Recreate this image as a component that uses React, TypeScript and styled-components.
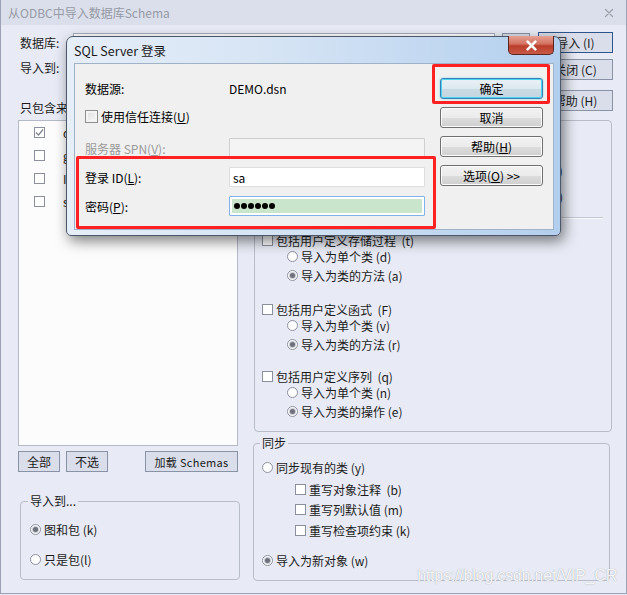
import React from 'react'
import styled, { createGlobalStyle } from 'styled-components'

const GlobalStyle = createGlobalStyle`
  html, body {
    margin: 0;
    padding: 0;
    background: #e8ebf5;
  }
  body {
    font-family: "Noto Sans CJK SC", "Noto Sans", sans-serif;
    font-size: 12px;
    color: #1b1b1b;
  }
  * { box-sizing: border-box; }
`

const Window = styled.div`
  position: relative;
  width: 627px;
  height: 594px;
  background: #e8ebf5;
  border: 1px solid #9aa3b6;
  border-top: none;
  display: flex;
  flex-direction: column;
  overflow: hidden;
`

const TitleBar = styled.div`
  height: 25px;
  flex: none;
  background: #dbdfeb;
  display: flex;
  align-items: center;
  justify-content: space-between;
  padding: 0 12px 0 7px;
  color: #969aa5;
  font-size: 12px;
`

const Body = styled.div`
  flex: 1;
  display: flex;
  flex-direction: column;
  padding: 7px 14px 0 17px;
`

const TopRow = styled.div`
  display: flex;
  height: 88px;
  flex: none;
`

const Fields = styled.div`
  flex: 1;
  display: flex;
  flex-direction: column;
`

const FieldRow = styled.div<{ $top?: number }>`
  display: flex;
  align-items: center;
  height: 20px;
  margin-top: ${p => p.$top ?? 0}px;
`

const FieldLabel = styled.span`
  width: 55px;
  padding-left: 2px;
  flex: none;
`

const TextBox = styled.div`
  width: 422px;
  height: 19px;
  background: #fff;
  border: 1px solid #a5acbd;
`

const ClassicButton = styled.div<{ $w?: number; $top?: number; $default?: boolean }>`
  width: ${p => p.$w ?? 75}px;
  height: 21px;
  margin-top: ${p => p.$top ?? 0}px;
  flex: none;
  display: flex;
  align-items: center;
  justify-content: center;
  background: #d9deea;
  border: 1px solid ${p => (p.$default ? '#2f568c' : '#8a93a6')};
  color: #1b1b1b;
  white-space: nowrap;
`

const BrowseButton = styled(ClassicButton)`
  height: 19px;
  margin-left: 7px;
`

const IncludeLabel = styled.div`
  margin-top: 23px;
  padding-left: 2px;
  line-height: 16px;
`

const ButtonCol = styled.div`
  width: 75px;
  margin-left: 8px;
  display: flex;
  flex-direction: column;
`

const Main = styled.div`
  flex: 1;
  display: flex;
`

const LeftCol = styled.div`
  width: 220px;
  flex: none;
  display: flex;
  flex-direction: column;
`

const ListBox = styled.div`
  height: 326px;
  background: #fcfcfc;
  border: 1px solid #b5bac8;
  padding: 0 0 0 15px;
`

const ListItem = styled.div`
  height: 23px;
  display: flex;
  align-items: center;
  gap: 18px;
  white-space: nowrap;
`

const ListButtons = styled.div`
  display: flex;
  gap: 6px;
  margin-top: 5px;
`

const LoadButton = styled(ClassicButton)`
  margin-left: auto;
  font-size: 11px;
  letter-spacing: 0.3px;
`

const GroupBox = styled.div<{ $h: number; $top?: number; $left?: number; $w?: string; $pad?: number }>`
  height: ${p => p.$h}px;
  width: ${p => p.$w ?? 'auto'};
  margin-top: ${p => p.$top ?? 0}px;
  margin-left: ${p => p.$left ?? 0}px;
  border: 1px solid #b8bdc9;
  border-radius: 4px;
  padding-left: ${p => p.$pad ?? 8}px;
  display: flex;
  flex-direction: column;
  flex: none;
`

const Legend = styled.div`
  width: fit-content;
  margin: -8px 0 0 -2px;
  padding: 0 2px;
  line-height: 14px;
  background: #e8ebf5;
`

const RightCol = styled.div`
  width: 358px;
  margin-left: 16px;
  flex: none;
  display: flex;
  flex-direction: column;
`

const OptionRow = styled.div<{ $top?: number; $indent?: number }>`
  height: 16px;
  display: flex;
  align-items: center;
  gap: 3px;
  margin-top: ${p => p.$top ?? 0}px;
  padding-left: ${p => p.$indent ?? 0}px;
  white-space: pre;
`

const Separator = styled.div`
  height: 2px;
  margin: 13px 8px 0 0;
  border-top: 1px solid #c3c7d2;
  border-bottom: 1px solid #fbfbfd;
  flex: none;
`

const Box = styled.span`
  width: 11px;
  height: 11px;
  flex: none;
  background: #fff;
  border: 1px solid #8b909e;
  display: inline-flex;
  align-items: center;
  justify-content: center;
`

const Round = styled.span<{ $on?: boolean }>`
  width: 11px;
  height: 11px;
  flex: none;
  border-radius: 50%;
  background: #fff;
  border: 1px solid #8b909e;
  display: inline-flex;
  align-items: center;
  justify-content: center;
  &::after {
    content: '';
    display: ${p => (p.$on ? 'block' : 'none')};
    width: 5px;
    height: 5px;
    border-radius: 50%;
    background: #6d717c;
    box-shadow: 0 0 0 1px #c9ccd4;
  }
`

const Watermark = styled.div`
  position: absolute;
  right: 9px;
  bottom: 8px;
  font-family: "Liberation Sans", Arial, sans-serif;
  font-size: 16px;
  color: rgba(255, 255, 255, 0.92);
  text-shadow: 0 0 1px rgba(110, 115, 125, 0.7);
  letter-spacing: -0.2px;
`

/* ---------- SQL Server login dialog ---------- */

const Dialog = styled.div`
  position: absolute;
  left: 65px;
  top: 36px;
  width: 495px;
  height: 200px;
  border: 1px solid #4c5869;
  border-radius: 7px 7px 5px 5px;
  background: linear-gradient(90deg, #e6eef8 0%, #d4e3f4 45%, #b3cfee 100%);
  box-shadow: 3px 5px 14px rgba(0, 0, 0, 0.5);
  padding: 0 6px 5px 7px;
  display: flex;
  flex-direction: column;
  font-size: 12px;
  color: #000;
`

const DialogTitleBar = styled.div`
  height: 26px;
  flex: none;
  display: flex;
  justify-content: space-between;
  align-items: flex-start;
`

const DialogTitle = styled.span`
  padding-top: 6px;
  line-height: 16px;
  font-size: 12.5px;
  color: #1a1a1a;
`

const CloseButton = styled.div`
  width: 46px;
  height: 19px;
  margin-top: -1px;
  border: 1px solid #5c2620;
  border-top: none;
  border-radius: 0 0 5px 5px;
  background: linear-gradient(180deg, #e5a294 0%, #d3705f 45%, #bb3d2c 55%, #c85a45 100%);
  display: flex;
  align-items: center;
  justify-content: center;
`

const Client = styled.div`
  position: relative;
  flex: 1;
  background: #f0f0f0;
  border: 1px solid #9fb2c8;
  display: flex;
  padding: 14px 10px 0 10px;
`

const FormCol = styled.div`
  width: 340px;
  display: flex;
  flex-direction: column;
`

const FormRow = styled.div<{ $top?: number; $muted?: boolean }>`
  display: flex;
  align-items: center;
  height: 20px;
  margin-top: ${p => p.$top ?? 0}px;
  color: ${p => (p.$muted ? '#9a9a9a' : '#000')};
`

const FormLabel = styled.span`
  width: 144px;
  flex: none;
`

const CheckLabel = styled.label`
  display: flex;
  align-items: center;
  gap: 3px;
`

const VistaBox = styled.span`
  width: 13px;
  height: 13px;
  border: 1px solid #8f8f8f;
  background: linear-gradient(135deg, #dcdcdc, #fbfbfb);
  box-shadow: inset 0 0 0 2px #f4f4f4;
`

const Input = styled.div<{ $variant?: 'disabled' | 'focus' }>`
  width: 196px;
  height: 20px;
  display: flex;
  align-items: center;
  padding: ${p => (p.$variant === 'focus' ? '2px' : '0 3px')};
  background: ${p => (p.$variant === 'disabled' ? '#f4f4f4' : '#fff')};
  border: 1px solid ${p => (p.$variant === 'focus' ? '#7eb4ea' : p.$variant === 'disabled' ? '#cfcfcf' : '#dedede')};
  border-radius: 1px;
`

const PasswordFill = styled.div`
  flex: 1;
  height: 100%;
  background: #c9e6cc;
  display: flex;
  align-items: center;
  gap: 1px;
  padding-left: 2px;
`

const Dot = styled.span`
  width: 6px;
  height: 6px;
  border-radius: 50%;
  background: #000;
`

const DialogButtons = styled.div`
  margin-left: 15px;
  width: 103px;
  display: flex;
  flex-direction: column;
  gap: 8px;
`

const VistaButton = styled.div<{ $primary?: boolean }>`
  height: 21px;
  display: flex;
  align-items: center;
  justify-content: center;
  border-radius: 3px;
  border: 1px solid ${p => (p.$primary ? '#3c7fb1' : '#707070')};
  background: ${p =>
    p.$primary
      ? 'linear-gradient(180deg, #e9f1f6 0%, #dde9f0 50%, #cbdbe4 51%, #c3d5df 100%)'
      : 'linear-gradient(180deg, #f2f2f2 0%, #ebebeb 50%, #dddddd 51%, #cfcfcf 100%)'};
  box-shadow: ${p => (p.$primary ? 'inset 0 0 0 1px #48d5f6, 0 0 2px #7ad0f0' : 'inset 0 0 0 1px #fcfcfc')};
`

const Annotation = styled.div<{ $l: number; $t: number; $w: number; $h: number }>`
  position: absolute;
  left: ${p => p.$l}px;
  top: ${p => p.$t}px;
  width: ${p => p.$w}px;
  height: ${p => p.$h}px;
  border: 3px solid #ff2121;
  border-radius: 2px;
  pointer-events: none;
`

const CheckMark = () => (
  <svg width="9" height="9" viewBox="0 0 9 9">
    <path d="M1 4.5 L3.5 7 L8 1.5" fill="none" stroke="#7b808c" strokeWidth="1.2" />
  </svg>
)

const Cross = ({ color, size, width }: { color: string; size: number; width: number }) => (
  <svg width={size} height={size} viewBox="0 0 10 10">
    <path d="M1.5 1.5 L8.5 8.5 M8.5 1.5 L1.5 8.5" stroke={color} strokeWidth={width} strokeLinecap="round" />
  </svg>
)

const schemas = [
  { name: 'dbo', checked: true },
  { name: 'guest', checked: false },
  { name: 'INFORMATION_SCHEMA', checked: false },
  { name: 'sys', checked: false },
]

const sections = [
  { title: '包括用户定义存储过程  (t)', top: 13, one: '导入为单个类 (d)', two: '导入为类的方法 (a)' },
  { title: '包括用户定义函式  (F)', top: 18, one: '导入为单个类 (v)', two: '导入为类的方法 (r)' },
  { title: '包括用户定义序列  (q)', top: 16, one: '导入为单个类 (n)', two: '导入为类的操作 (e)' },
]

const LoginDialog = () => (
  <Dialog>
    <DialogTitleBar>
      <DialogTitle>SQL Server 登录</DialogTitle>
      <CloseButton>
        <Cross color="#fff" size={11} width={2.4} />
      </CloseButton>
    </DialogTitleBar>
    <Client>
      <FormCol>
        <FormRow>
          <FormLabel>数据源:</FormLabel>
          <span>DEMO.dsn</span>
        </FormRow>
        <FormRow $top={8}>
          <CheckLabel>
            <VistaBox />
            <span>
              使用信任连接(<u>U</u>)
            </span>
          </CheckLabel>
        </FormRow>
        <FormRow $top={12} $muted>
          <FormLabel>服务器 SPN(<u>V</u>):</FormLabel>
          <Input $variant="disabled" />
        </FormRow>
        <FormRow $top={9}>
          <FormLabel>登录 ID(<u>L</u>):</FormLabel>
          <Input>sa</Input>
        </FormRow>
        <FormRow $top={9}>
          <FormLabel>密码(<u>P</u>):</FormLabel>
          <Input $variant="focus">
            <PasswordFill>
              {Array.from({ length: 6 }).map((_, i) => (
                <Dot key={i} />
              ))}
            </PasswordFill>
          </Input>
        </FormRow>
      </FormCol>
      <DialogButtons>
        <VistaButton $primary>确定</VistaButton>
        <VistaButton>取消</VistaButton>
        <VistaButton>
          <span>
            帮助(<u>H</u>)
          </span>
        </VistaButton>
        <VistaButton>
          <span>
            选项(<u>O</u>) &gt;&gt;
          </span>
        </VistaButton>
      </DialogButtons>
      <Annotation $l={357} $t={0} $w={118} $h={40} />
      <Annotation $l={1} $t={92} $w={360} $h={73} />
    </Client>
  </Dialog>
)

export default function App() {
  return (
    <>
      <GlobalStyle />
      <Window>
        <TitleBar>
          <span>从ODBC中导入数据库Schema</span>
          <Cross color="#9ba0ab" size={10} width={1.3} />
        </TitleBar>
        <Body>
          <TopRow>
            <Fields>
              <FieldRow>
                <FieldLabel>数据库:</FieldLabel>
                <TextBox />
                <BrowseButton $w={28}>...</BrowseButton>
              </FieldRow>
              <FieldRow $top={5}>
                <FieldLabel>导入到:</FieldLabel>
                <TextBox />
              </FieldRow>
              <IncludeLabel>只包含来自下列Schema的表:</IncludeLabel>
            </Fields>
            <ButtonCol>
              <ClassicButton $default>导入 (I)</ClassicButton>
              <ClassicButton $top={6}>关闭 (C)</ClassicButton>
              <ClassicButton $top={10}>帮助 (H)</ClassicButton>
            </ButtonCol>
          </TopRow>
          <Main>
            <LeftCol>
              <ListBox>
                {schemas.map(s => (
                  <ListItem key={s.name}>
                    <Box>{s.checked && <CheckMark />}</Box>
                    <span>{s.name}</span>
                  </ListItem>
                ))}
              </ListBox>
              <ListButtons>
                <ClassicButton $w={42}>全部</ClassicButton>
                <ClassicButton $w={42}>不选</ClassicButton>
                <LoadButton $w={93}>加载 Schemas</LoadButton>
              </ListButtons>
              <GroupBox $h={79} $top={29} $left={2} $w="220px" $pad={9}>
                <Legend>导入到...</Legend>
                <OptionRow $top={13}>
                  <Round $on />
                  图和包 (k)
                </OptionRow>
                <OptionRow $top={14}>
                  <Round />
                  只是包(l)
                </OptionRow>
              </GroupBox>
            </LeftCol>
            <RightCol>
              <GroupBox $h={312} $pad={7}>
                <OptionRow $top={15}>
                  <Box />
                  包括用户定义表和视图 (s)
                </OptionRow>
                <OptionRow $top={10} $indent={25}>
                  <Round />
                  导入为单个类并包含全部的列和索引信息说明   (s)
                </OptionRow>
                <OptionRow $top={10} $indent={25}>
                  <Round $on />
                  导入为多个类并包含全部的列和索引信息说明   (x)
                </OptionRow>
                <Separator />
                {sections.map(s => (
                  <React.Fragment key={s.title}>
                    <OptionRow $top={s.top}>
                      <Box />
                      {s.title}
                    </OptionRow>
                    <OptionRow $indent={25}>
                      <Round />
                      {s.one}
                    </OptionRow>
                    <OptionRow $top={3} $indent={25}>
                      <Round $on />
                      {s.two}
                    </OptionRow>
                  </React.Fragment>
                ))}
              </GroupBox>
              <GroupBox $h={138} $top={11} $left={-1} $w="357px" $pad={8}>
                <Legend>同步</Legend>
                <OptionRow $top={9}>
                  <Round />
                  同步现有的类 (y)
                </OptionRow>
                <OptionRow $top={6} $indent={33}>
                  <Box />
                  重写对象注释  (b)
                </OptionRow>
                <OptionRow $top={4} $indent={33}>
                  <Box />
                  重写列默认值 (m)
                </OptionRow>
                <OptionRow $top={5} $indent={33}>
                  <Box />
                  重写检查项约束 (k)
                </OptionRow>
                <OptionRow $top={14}>
                  <Round $on />
                  导入为新对象 (w)
                </OptionRow>
              </GroupBox>
            </RightCol>
          </Main>
        </Body>
        <LoginDialog />
        <Watermark>https://blog.csdn.net/VIP_CR</Watermark>
      </Window>
    </>
  )
}
